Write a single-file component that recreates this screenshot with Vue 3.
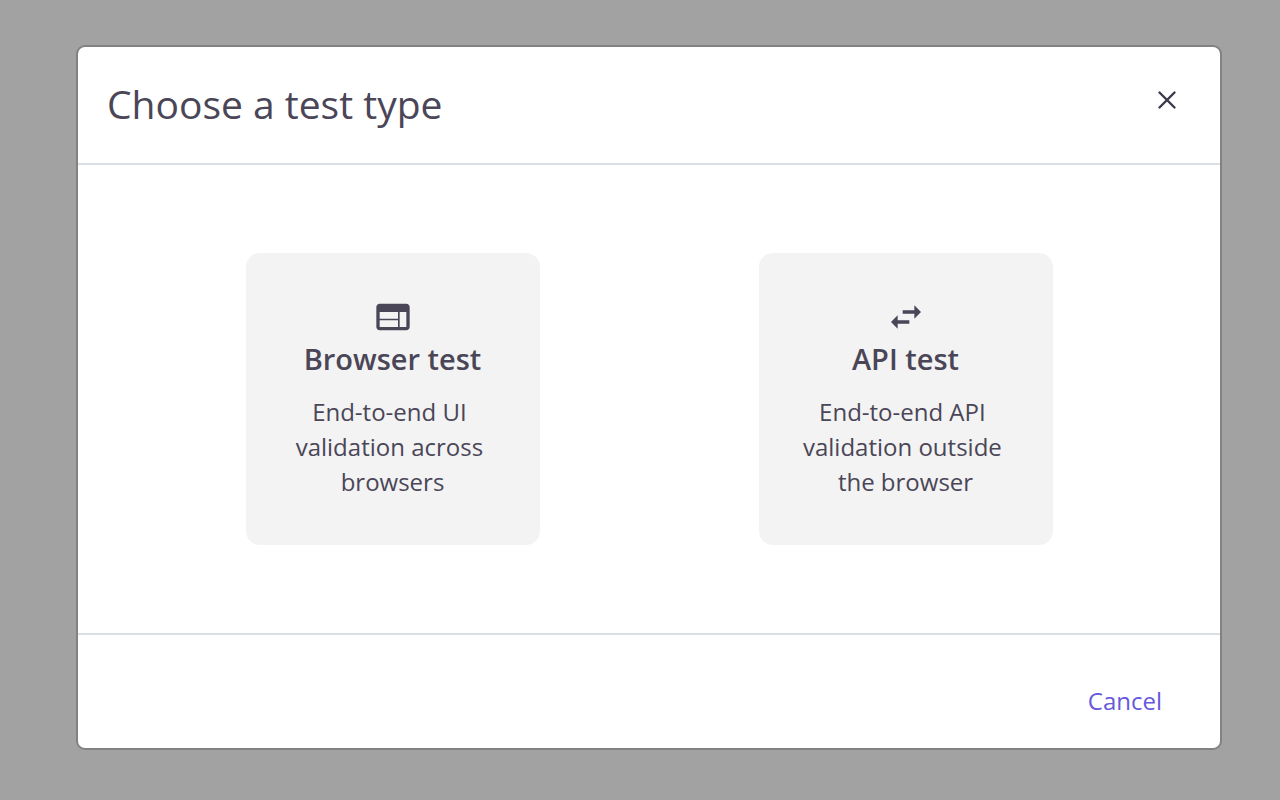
<script setup>
import { ref } from 'vue'

const emit = defineEmits(['select', 'close'])

// ── State ─────────────────────────────────────────────────────────────────────
const open = ref(true)

const testTypes = [
  {
    id: 'browser',
    name: 'Browser test',
    description: 'End-to-end UI validation across browsers',
    icon: 'M20 4H4c-1.1 0-2 .9-2 2v12c0 1.1.9 2 2 2h16c1.1 0 2-.9 2-2V6c0-1.1-.9-2-2-2zM15 18H4v-4h11v4zM15 13H4V9h11v4zM20 18h-4V9h4v9z',
  },
  {
    id: 'api',
    name: 'API test',
    description: 'End-to-end API validation outside the browser',
    icon: 'M6.99 11L3 15l3.99 4v-3H14v-2H6.99v-3zM21 9l-3.99-4v3H10v2h7.01v3L21 9z',
  },
]

// ── Methods ───────────────────────────────────────────────────────────────────
function select(type) {
  emit('select', type.id)
}

function close() {
  open.value = false
  emit('close')
}
</script>

<template>
  <div class="overlay">
    <div v-if="open" class="modal" role="dialog" aria-modal="true" aria-labelledby="modal-title">

      <!-- Header -->
      <header class="modal__header">
        <h1 id="modal-title" class="modal__title">Choose a test type</h1>
        <button class="modal__close" type="button" aria-label="Close" @click="close">
          <svg viewBox="0 0 20 20" width="20" height="20" aria-hidden="true">
            <path d="M2.5 2.5l15 15M17.5 2.5l-15 15" />
          </svg>
        </button>
      </header>

      <!-- Test types -->
      <div class="modal__body">
        <button
          v-for="type in testTypes"
          :key="type.id"
          class="card"
          type="button"
          @click="select(type)"
        >
          <svg class="card__icon" viewBox="0 0 24 24" aria-hidden="true">
            <path :d="type.icon" />
          </svg>
          <span class="card__name">{{ type.name }}</span>
          <span class="card__text">{{ type.description }}</span>
        </button>
      </div>

      <!-- Footer -->
      <footer class="modal__footer">
        <button class="modal__cancel" type="button" @click="close">Cancel</button>
      </footer>

    </div>
  </div>
</template>

<style>
body { margin: 0; background: #a2a2a2; }
</style>

<style scoped>
.overlay {
  box-sizing: border-box;
  min-height: 100vh;
  padding: 45px 58px 50px 76px;
  background: #a2a2a2;
  font-family: "Open Sans", "Noto Sans", sans-serif;
  color: #4a4657;
}

.modal {
  background: #fff;
  border: 2px solid #828282;
  border-radius: 9px;
}

/* Header */
.modal__header {
  display: flex;
  align-items: flex-start;
  justify-content: space-between;
  padding: 29px 29px 32px;
  border-bottom: 2px solid #dcdfe2;
}
.modal__title { margin: 0; font-size: 39px; font-weight: 400; line-height: 55px; }
.modal__close {
  display: flex;
  padding: 14px;
  border: none;
  background: none;
  cursor: pointer;
}
.modal__close path { fill: none; stroke: #3d394a; stroke-width: 2.4; stroke-linecap: round; }

/* Body */
.modal__body {
  display: flex;
  flex-wrap: wrap;
  justify-content: space-around;
  gap: 30px 0;
  padding: 88px 58px;
}

.card {
  box-sizing: border-box;
  display: flex;
  flex-direction: column;
  align-items: center;
  width: 294px;
  padding: 44px 42px 46px;
  border: none;
  border-radius: 14px;
  background: #f3f3f3;
  font: inherit;
  color: inherit;
  text-align: center;
  cursor: pointer;
}
.card:hover { background: #ececef; }
.card__icon { width: 40px; height: 40px; fill: currentColor; }
.card__name { font-size: 29px; font-weight: 600; line-height: 44px; }
.card__text { margin-top: 13px; font-size: 24px; line-height: 35px; white-space: break-spaces; }

/* Footer */
.modal__footer {
  display: flex;
  justify-content: flex-end;
  padding: 48px 44px 30px;
  border-top: 2px solid #dcdfe2;
}
.modal__cancel {
  padding: 0 14px;
  border: none;
  background: none;
  font-family: inherit;
  font-size: 24px;
  line-height: 35px;
  color: #6559dc;
  cursor: pointer;
}
</style>
